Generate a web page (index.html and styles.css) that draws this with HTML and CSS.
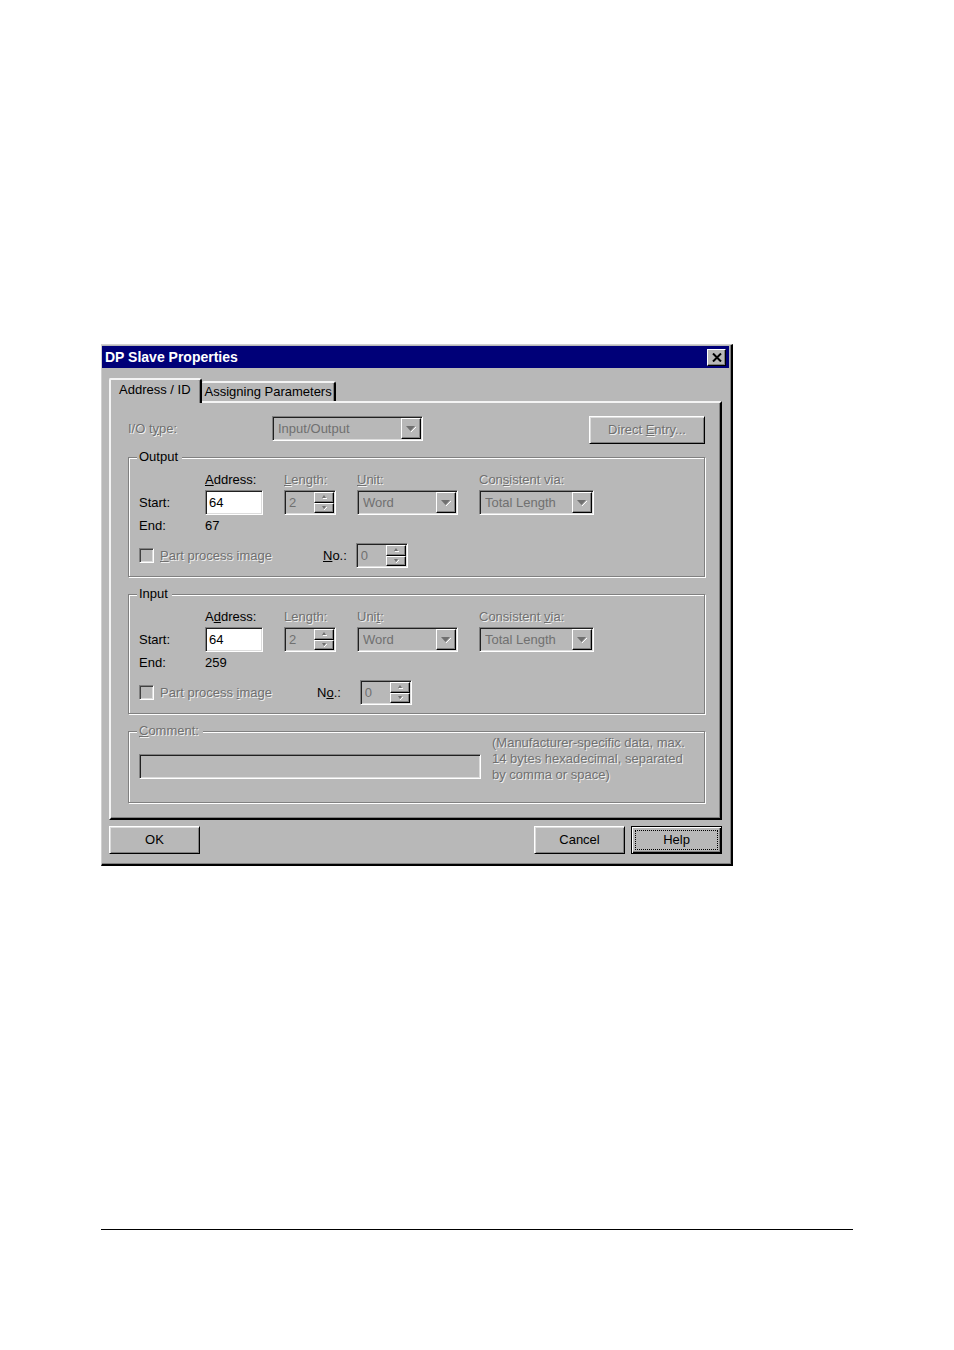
FILE: index.html
```html
<!DOCTYPE html>
<html lang="en">
<head>
    <meta charset="UTF-8">
    <meta name="viewport" content="width=device-width, initial-scale=1.0">
    <title>DP Slave Properties</title>
    <link rel="stylesheet" href="styles.css">
</head>
<body>
    <main class="dialog" role="dialog" aria-labelledby="dialog-title">
        <div class="title-bar">
            <h1 id="dialog-title">DP Slave Properties</h1>
            <button class="close" aria-label="Close">
                <svg width="10" height="9" viewBox="0 0 10 9"><path d="M1 0.5L9 8.5M9 0.5L1 8.5" stroke="#000" stroke-width="2"/></svg>
            </button>
        </div>

        <div class="dialog-body">
            <div class="tabs" role="tablist">
                <button class="tab active" role="tab" aria-selected="true">Address / ID</button>
                <button class="tab" role="tab" aria-selected="false">Assigning Parameters</button>
            </div>

            <form class="panel" id="properties" role="tabpanel">
                <div class="type-row">
                    <label for="io-type" class="off">I/O t<u>y</u>pe:</label>
                    <span class="combo combo-type">
                        <select id="io-type" disabled><option>Input/Output</option></select>
                        <span class="arrow"><svg width="10" height="6" viewBox="0 0 10 6"><path d="M5 6L10 1" stroke="#fff"/><path d="M0 0H9L4.500 5Z" fill="#707070"/></svg></span>
                    </span>
                    <button type="button" class="btn btn-entry off" disabled>Direct <u>E</u>ntry...</button>
                </div>

                <fieldset>
                    <legend>Output</legend>
                    <div class="fields">
                        <label for="out-address" class="col-address"><u>A</u>ddress:</label>
                        <label for="out-length" class="off"><u>L</u>ength:</label>
                        <label for="out-unit" class="off"><u>U</u>nit:</label>
                        <label for="out-via" class="off">Con<u>s</u>istent via:</label>

                        <span>Start:</span>
                        <input type="text" id="out-address" class="address" value="64">
                        <span class="spin">
                            <input type="text" id="out-length" value="2" disabled>
                            <span class="steps">
                                <button type="button" aria-label="Increase length" disabled><svg width="6" height="4" viewBox="0 0 6 4"><path d="M3 0L5 3H1Z" fill="#707070"/><path d="M2 3.500H6" stroke="#fff"/></svg></button>
                                <button type="button" aria-label="Decrease length" disabled><svg width="6" height="4" viewBox="0 0 6 4"><path d="M3 4L6 1" stroke="#fff"/><path d="M1 0H5L3 3Z" fill="#707070"/></svg></button>
                            </span>
                        </span>
                        <span class="combo combo-unit">
                            <select id="out-unit" disabled><option>Word</option></select>
                            <span class="arrow"><svg width="10" height="6" viewBox="0 0 10 6"><path d="M5 6L10 1" stroke="#fff"/><path d="M0 0H9L4.500 5Z" fill="#707070"/></svg></span>
                        </span>
                        <span class="combo combo-via">
                            <select id="out-via" disabled><option>Total Length</option></select>
                            <span class="arrow"><svg width="10" height="6" viewBox="0 0 10 6"><path d="M5 6L10 1" stroke="#fff"/><path d="M0 0H9L4.500 5Z" fill="#707070"/></svg></span>
                        </span>

                        <span>End:</span>
                        <output>67</output>
                    </div>
                    <div class="part">
                        <input type="checkbox" id="out-part" disabled>
                        <label for="out-part" class="part-label off"><u>P</u>art process image</label>
                        <label for="out-no"><u>N</u>o.:</label>
                        <span class="spin">
                            <input type="text" id="out-no" value="0" disabled>
                            <span class="steps">
                                <button type="button" aria-label="Increase number" disabled><svg width="6" height="4" viewBox="0 0 6 4"><path d="M3 0L5 3H1Z" fill="#707070"/><path d="M2 3.500H6" stroke="#fff"/></svg></button>
                                <button type="button" aria-label="Decrease number" disabled><svg width="6" height="4" viewBox="0 0 6 4"><path d="M3 4L6 1" stroke="#fff"/><path d="M1 0H5L3 3Z" fill="#707070"/></svg></button>
                            </span>
                        </span>
                    </div>
                </fieldset>

                <fieldset>
                    <legend>Input</legend>
                    <div class="fields">
                        <label for="in-address" class="col-address">A<u>d</u>dress:</label>
                        <label for="in-length" class="off">Len<u>g</u>th:</label>
                        <label for="in-unit" class="off">Uni<u>t</u>:</label>
                        <label for="in-via" class="off">Consistent <u>v</u>ia:</label>

                        <span>Start:</span>
                        <input type="text" id="in-address" class="address" value="64">
                        <span class="spin">
                            <input type="text" id="in-length" value="2" disabled>
                            <span class="steps">
                                <button type="button" aria-label="Increase length" disabled><svg width="6" height="4" viewBox="0 0 6 4"><path d="M3 0L5 3H1Z" fill="#707070"/><path d="M2 3.500H6" stroke="#fff"/></svg></button>
                                <button type="button" aria-label="Decrease length" disabled><svg width="6" height="4" viewBox="0 0 6 4"><path d="M3 4L6 1" stroke="#fff"/><path d="M1 0H5L3 3Z" fill="#707070"/></svg></button>
                            </span>
                        </span>
                        <span class="combo combo-unit">
                            <select id="in-unit" disabled><option>Word</option></select>
                            <span class="arrow"><svg width="10" height="6" viewBox="0 0 10 6"><path d="M5 6L10 1" stroke="#fff"/><path d="M0 0H9L4.500 5Z" fill="#707070"/></svg></span>
                        </span>
                        <span class="combo combo-via">
                            <select id="in-via" disabled><option>Total Length</option></select>
                            <span class="arrow"><svg width="10" height="6" viewBox="0 0 10 6"><path d="M5 6L10 1" stroke="#fff"/><path d="M0 0H9L4.500 5Z" fill="#707070"/></svg></span>
                        </span>

                        <span>End:</span>
                        <output>259</output>
                    </div>
                    <div class="part part-wide">
                        <input type="checkbox" id="in-part" disabled>
                        <label for="in-part" class="part-label off">Part process <u>i</u>mage</label>
                        <label for="in-no">N<u>o</u>.:</label>
                        <span class="spin">
                            <input type="text" id="in-no" value="0" disabled>
                            <span class="steps">
                                <button type="button" aria-label="Increase number" disabled><svg width="6" height="4" viewBox="0 0 6 4"><path d="M3 0L5 3H1Z" fill="#707070"/><path d="M2 3.500H6" stroke="#fff"/></svg></button>
                                <button type="button" aria-label="Decrease number" disabled><svg width="6" height="4" viewBox="0 0 6 4"><path d="M3 4L6 1" stroke="#fff"/><path d="M1 0H5L3 3Z" fill="#707070"/></svg></button>
                            </span>
                        </span>
                    </div>
                </fieldset>

                <fieldset class="comment">
                    <legend class="off"><label for="comment"><u>C</u>omment:</label></legend>
                    <div class="comment-row">
                        <input type="text" id="comment" aria-describedby="comment-hint" disabled>
                        <p id="comment-hint" class="off">(Manufacturer-specific data, max.<br>14 bytes hexadecimal, separated<br>by comma or space)</p>
                    </div>
                </fieldset>
            </form>

            <div class="actions">
                <button class="btn">OK</button>
                <button class="btn btn-cancel">Cancel</button>
                <button class="btn btn-default">Help</button>
            </div>
        </div>
    </main>
    <hr>
</body>
</html>
```
FILE: styles.css
```css
:root {
    --face: #b8b8b8;
    --shadow: #808080;
    --disabled: #707070;
    --light: #f4f4f4;
    --title: #000078;
}

* {
    box-sizing: border-box;
}

body {
    display: flex;
    flex-direction: column;
    min-height: 100vh;
    margin: 0;
    padding: 344px 101px 120px;
    background: #fff;
    color: #000;
    font: 13px/16px "Liberation Sans", Arial, sans-serif;
}

button, input, select {
    margin: 0;
    font: inherit;
    color: inherit;
}

svg {
    display: block;
}

hr {
    width: 100%;
    margin: auto 0 0;
    border: 0;
    border-top: 1px solid #000;
}

.dialog {
    width: 100%;
    max-width: 632px;
    padding: 1px 2px 1px 0;
    background: var(--face);
    border: 1px solid #d0d0d0;
    border-right: 2px solid #000;
    border-bottom: 2px solid #000;
    box-shadow: inset -1px -1px var(--shadow);
}

/* title bar */
.title-bar {
    display: flex;
    align-items: center;
    justify-content: space-between;
    height: 22px;
    padding: 0 3px;
    background: var(--title);
    color: #fff;
}

.title-bar h1 {
    margin: 0;
    font-size: 14px;
    line-height: 16px;
}

.close {
    display: flex;
    align-items: center;
    justify-content: center;
    width: 19px;
    height: 17px;
    padding: 0;
    background: var(--face);
    border: 1px solid;
    border-color: #fff #000 #000 #fff;
    box-shadow: inset -1px -1px var(--shadow);
}

.dialog-body {
    padding: 10px 7px 9px;
}

/* tabs */
.tabs {
    display: flex;
    align-items: flex-end;
}

.tab {
    height: 20px;
    padding: 0 2px 0 3px;
    background: var(--face);
    border: 2px solid var(--light);
    border-right-color: #000;
    border-bottom: 0;
    border-left: 0;
    border-radius: 2px 3px 0 0;
    box-shadow: inset -1px 0 var(--shadow);
}

.tab.active {
    position: relative;
    height: 25px;
    margin-bottom: -2px;
    padding: 0 9px 3px 8px;
    border-left: 2px solid var(--light);
}

.panel {
    padding: 13px 15px 15px 17px;
    border: 2px solid;
    border-color: var(--light) #000 #000 var(--light);
    box-shadow: inset -1px -1px var(--shadow);
}

.off {
    color: var(--disabled);
    text-shadow: 1px 1px #f0f0f0;
}

.type-row {
    display: flex;
    align-items: flex-start;
    margin-bottom: 5px;
}

.type-row label {
    width: 144px;
    padding-top: 5px;
}

/* sunken fields */
.address, .spin, .combo, #comment {
    height: 25px;
    background: var(--face);
    border: 1px solid;
    border-color: var(--shadow) #fff #fff var(--shadow);
    border-radius: 0;
    box-shadow: inset 1px 1px #202020, inset -1px -1px #dcdcdc;
}

.address {
    width: 58px;
    padding: 0 3px;
    background: #fff;
}

.spin, .combo {
    display: flex;
    padding: 1px;
}

.spin input, .combo select {
    flex: 1;
    min-width: 0;
    padding: 0 4px;
    background: transparent;
    border: 0;
    color: var(--disabled);
    opacity: 1;
    appearance: none;
}

.spin input {
    padding: 0 3px;
}

.spin {
    width: 52px;
}

.combo-type {
    width: 151px;
}

.combo-unit {
    width: 101px;
}

.combo-via {
    width: 115px;
}

.arrow, .steps button {
    display: flex;
    align-items: center;
    justify-content: center;
    width: 20px;
    padding: 0;
    background: var(--face);
    border: 1px solid;
    border-color: #fff #000 #000 #fff;
    box-shadow: inset -1px -1px var(--shadow);
}

.steps {
    display: flex;
    flex-direction: column;
}

.steps button {
    flex: 1;
}

/* group boxes */
fieldset {
    min-width: 0;
    margin: 0 0 9px;
    padding: 6px 10px 8px;
    border: 1px solid var(--shadow);
    box-shadow: 1px 1px #fff, inset 1px 1px #fff;
}

legend {
    margin-left: -2px;
    padding: 0 4px 0 2px;
    background: var(--face);
}

.fields {
    display: grid;
    grid-template-columns: 66px 79px 73px 122px auto;
    grid-template-rows: 17px 25px 17px;
    row-gap: 2px;
    align-items: center;
    justify-content: start;
}

.col-address {
    grid-column: 2;
}

.part {
    display: flex;
    align-items: center;
    margin-top: 9px;
}

.part input[type="checkbox"] {
    width: 15px;
    height: 15px;
    margin-right: 6px;
    background: var(--face);
    border: 1px solid;
    border-color: var(--shadow) #fff #fff var(--shadow);
    box-shadow: inset 1px 1px #404040, inset -1px -1px #dcdcdc;
    appearance: none;
}

.part-label {
    width: 163px;
}

.part .spin {
    margin-left: 9px;
}

.part-wide .part-label {
    width: 157px;
}

.part-wide .spin {
    margin-left: 19px;
}

.comment {
    margin-bottom: 0;
    padding: 0 10px 19px;
}

.comment-row {
    display: flex;
    gap: 11px;
}

#comment {
    flex: 1;
    min-width: 0;
    margin-top: 15px;
}

.comment p {
    width: 202px;
    margin: -4px 0 0;
}

/* push buttons */
.btn {
    width: 91px;
    height: 28px;
    padding: 0;
    background: var(--face);
    border: 1px solid;
    border-color: #fff #000 #000 #fff;
    box-shadow: inset 1px 1px #dcdcdc, inset -1px -1px var(--shadow);
}

.btn-entry {
    width: 116px;
    margin-left: auto;
}

.actions {
    display: flex;
    gap: 6px;
    padding-top: 6px;
}

.btn-cancel {
    margin-left: auto;
}

.btn-default {
    border-color: #000;
    box-shadow: inset 1px 1px #fff, inset -1px -1px #000, inset -2px -2px var(--shadow);
    outline: 1px dotted #000;
    outline-offset: -5px;
}
```
